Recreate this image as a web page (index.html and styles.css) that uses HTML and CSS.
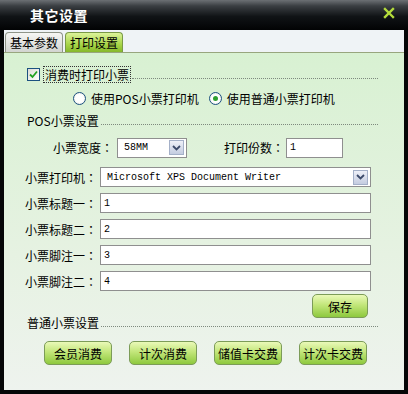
FILE: index.html
```html
<!DOCTYPE html>
<html lang="zh-CN">
  <head>
    <meta charset="UTF-8" />
    <title>其它设置</title>
    <link rel="stylesheet" href="styles.css">
  </head>
  <body>
    <div class="window">
      <div class="titlebar">
        <span class="title">其它设置</span>
        <svg class="close" width="12" height="12" viewBox="0 0 12 12">
          <path d="M2 2L10 10M10 2L2 10" stroke="#b4dc3c" stroke-width="2.4" stroke-linecap="square"/>
        </svg>
      </div>

      <div class="tabs">
        <div class="tab">基本参数</div>
        <div class="tab active">打印设置</div>
      </div>

      <div class="content">
        <div class="row check-row">
          <span class="checkbox">
            <svg width="9" height="9" viewBox="0 0 9 9">
              <path d="M1 4.5L3.5 7L8 1.5" fill="none" stroke="#21a121" stroke-width="1.8"/>
            </svg>
          </span>
          <span class="focus-label">消费时打印小票</span>
          <span class="dots"></span>
        </div>

        <div class="row radio-row">
          <span class="radio"></span>
          <span class="radio-label">使用POS小票打印机</span>
          <span class="radio checked"></span>
          <span class="radio-label">使用普通小票打印机</span>
        </div>

        <div class="row section">
          <span>POS小票设置</span>
          <span class="dots"></span>
        </div>

        <div class="row width-row">
          <span class="label label-short">小票宽度：</span>
          <div class="select small">
            <span class="select-text">58MM</span>
            <span class="select-btn">
              <svg width="9" height="6" viewBox="0 0 9 6"><path d="M1 1L4.5 4.5L8 1" fill="none" stroke="#3c4a6a" stroke-width="1.8"/></svg>
            </span>
          </div>
          <span class="label label-copies">打印份数：</span>
          <div class="input copies">1</div>
        </div>

        <div class="fields">
          <span class="label">小票打印机：</span>
          <div class="select">
            <span class="select-text">Microsoft XPS Document Writer</span>
            <span class="select-btn">
              <svg width="9" height="6" viewBox="0 0 9 6"><path d="M1 1L4.5 4.5L8 1" fill="none" stroke="#3c4a6a" stroke-width="1.8"/></svg>
            </span>
          </div>
          <span class="label">小票标题一：</span>
          <div class="input">1</div>
          <span class="label">小票标题二：</span>
          <div class="input">2</div>
          <span class="label">小票脚注一：</span>
          <div class="input">3</div>
          <span class="label">小票脚注二：</span>
          <div class="input">4</div>
        </div>

        <div class="save-row">
          <button class="btn save">保存</button>
        </div>

        <div class="row section plain">
          <span>普通小票设置</span>
          <span class="dots"></span>
        </div>

        <div class="btn-row">
          <button class="btn">会员消费</button>
          <button class="btn">计次消费</button>
          <button class="btn">储值卡交费</button>
          <button class="btn">计次卡交费</button>
        </div>
      </div>
    </div>
  </body>
</html>
```

FILE: styles.css
```css
body {
  margin: 0;
  padding: 0;
  font-family: "Noto Sans CJK SC", "Liberation Sans", sans-serif;
  font-size: 12px;
  color: #000;
  background: #000;
}

.window {
  width: 408px;
  height: 394px;
  box-sizing: border-box;
  background: #050607;
  padding: 0 4px 4px 4px;
  display: flex;
  flex-direction: column;
}

.titlebar {
  height: 30px;
  margin: 0 -4px;
  padding: 0 13px 0 30px;
  display: flex;
  align-items: center;
  justify-content: space-between;
  background: linear-gradient(#6c7074 0%, #3a3e42 20%, #101316 55%, #020304 100%);
}

.title {
  color: #fff;
  font-weight: bold;
  font-size: 14px;
  letter-spacing: 0.5px;
}

.close {
  margin-top: -4px;
}

.tabs {
  height: 22px;
  background: #eff3f6;
  border-bottom: 1px solid #98a67e;
  display: flex;
  align-items: flex-end;
  padding-left: 1px;
  gap: 2px;
}

.tab {
  height: 20px;
  width: 58px;
  box-sizing: border-box;
  border: 1px solid #8e9488;
  border-bottom: none;
  border-radius: 4px 4px 0 0;
  background: linear-gradient(#f6f6f4, #d2d4d0);
  display: flex;
  align-items: center;
  justify-content: center;
  font-size: 12px;
}

.tab.active {
  background: linear-gradient(#dcf39a, #a8d548 60%, #86b82a);
  border-color: #7a9a46;
}

.content {
  flex: 1;
  background: linear-gradient(#d8f1d2, #e6f2e2 60%, #eef3ee);
  padding: 0 26px 0 23px;
}

.row {
  display: flex;
  align-items: center;
}

.dots {
  flex: 1;
  border-bottom: 1px dotted #7e8a7e;
  margin-left: 2px;
  align-self: center;
  transform: translateY(4px);
}

.check-row {
  margin-top: 14px;
  height: 14px;
}

.checkbox {
  width: 11px;
  height: 11px;
  border: 1px solid #1c5180;
  background: linear-gradient(135deg, #dcdcd6, #fff);
  display: flex;
  align-items: center;
  justify-content: center;
  margin-right: 4px;
}

.focus-label {
  outline: 1px dotted #333;
  padding: 0 1px;
  line-height: 15px;
}

.radio-row {
  margin-top: 10px;
  height: 14px;
  padding-left: 46px;
}

.radio {
  width: 11px;
  height: 11px;
  border-radius: 50%;
  border: 1px solid #1c5180;
  background: radial-gradient(#fff 50%, #dcdcd4);
  margin-right: 5px;
  display: flex;
  align-items: center;
  justify-content: center;
}

.radio.checked::after {
  content: "";
  width: 5px;
  height: 5px;
  border-radius: 50%;
  background: #2fa02f;
}

.radio-label + .radio {
  margin-left: 10px;
}

.section {
  margin-top: 8px;
  height: 14px;
}

.width-row {
  margin-top: 10px;
  height: 21px;
}

/* centred full-width colon, as in the original dialog font */
.label {
  font-family: "Noto Sans CJK TC", "Noto Sans CJK SC", sans-serif;
  font-feature-settings: "locl" 0;
}

.label-short {
  margin-left: 26px;
  width: 64px;
}

.select {
  height: 20px;
  box-sizing: border-box;
  border: 1px solid #8f8f8f;
  background: #fff;
  display: flex;
  align-items: center;
  padding: 0 2px 0 6px;
}

.select.small {
  width: 70px;
}

.select-text {
  flex: 1;
  font-family: "Liberation Mono", "DejaVu Sans Mono", monospace;
  font-size: 10px;
}

.select-btn {
  width: 15px;
  height: 15px;
  box-sizing: border-box;
  border: 1px solid #a4b0c8;
  background: linear-gradient(#eef0f8, #c4cce0);
  display: flex;
  align-items: center;
  justify-content: center;
}

.label-copies {
  margin-left: 37px;
  width: 62px;
}

.input {
  height: 20px;
  box-sizing: border-box;
  border: 1px solid #8f8f8f;
  background: #fff;
  padding-left: 3px;
  display: flex;
  align-items: center;
  font-family: "Liberation Mono", "DejaVu Sans Mono", monospace;
  font-size: 10px;
}

.input.copies {
  width: 57px;
}

.fields {
  margin-top: 9px;
  margin-left: -2px;
  margin-right: -19px;
  display: grid;
  grid-template-columns: 75px 271px;
  row-gap: 6px;
  align-items: center;
}

.save-row {
  display: flex;
  justify-content: flex-end;
  margin-top: 3px;
  margin-right: 10px;
}

.btn {
  height: 24px;
  width: 68px;
  box-sizing: border-box;
  border: 1px solid #7c9c58;
  border-radius: 5px;
  background: linear-gradient(#eaf9b8, #c2e67a 45%, #8ec93e);
  font-family: "Noto Sans CJK SC", sans-serif;
  font-size: 12px;
  color: #000;
  padding: 0;
}

.btn.save {
  width: 56px;
}

.plain {
  margin-top: -3px;
}

.btn-row {
  margin-top: 12px;
  padding-left: 17px;
  display: flex;
  gap: 17px;
}
```
